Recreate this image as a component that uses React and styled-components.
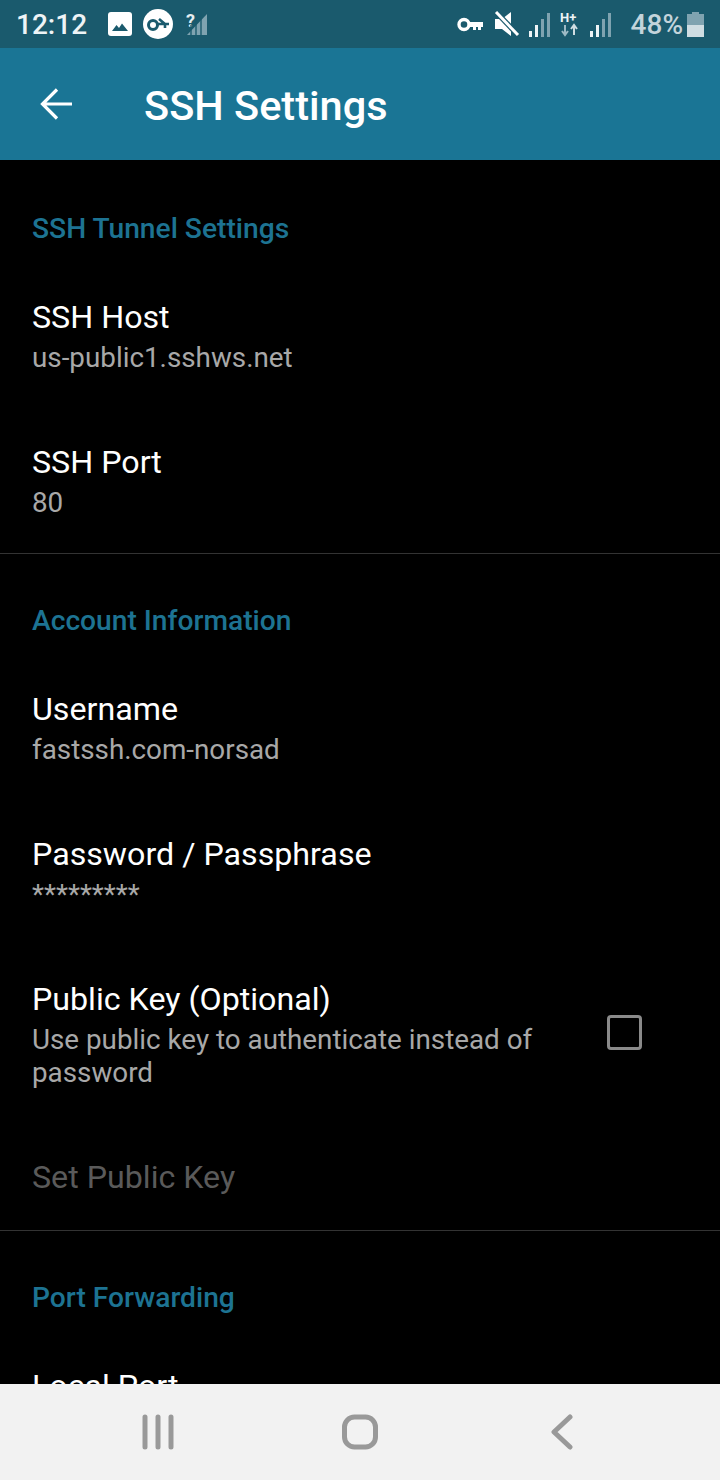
import React from 'react';
import styled, {createGlobalStyle} from 'styled-components';

const GlobalStyle = createGlobalStyle`
html, body {
    margin: 0;
    padding: 0;
    background: #000;
    font-family: Roboto, "Noto Sans", sans-serif;
}
`;

const Screen = styled.div`
width: 720px;
height: 1480px;
display: flex;
flex-direction: column;
overflow: hidden;
background: #000;
`;

const StatusBar = styled.div`
height: 48px;
flex: none;
display: flex;
align-items: center;
justify-content: space-between;
padding: 0 16px 0 16px;
background: #1a5a6d;
`;

const StatusGroup = styled.div`
display: flex;
align-items: center;
`;

const Clock = styled.span`
width: 92px;
font-size: 28px;
font-weight: 500;
color: #eef4f6;
`;

const Battery = styled.span`
margin-left: 19px;
font-size: 28px;
font-weight: 500;
color: #c3d4db;
`;

const StatusIcon = styled.svg`
flex: none;
display: block;
margin-left: ${props => props.$gap || 0}px;
`;

const Toolbar = styled.header`
height: 112px;
flex: none;
display: flex;
align-items: center;
padding-left: 40px;
background: #1a7595;
`;

const Title = styled.h1`
margin: 2px 0 0 72px;
font-size: 41.5px;
font-weight: 500;
color: #fff;
`;

const Content = styled.main`
flex: 1;
min-height: 0;
overflow: hidden;
`;

const Section = styled.section`
border-bottom: ${props => props.$last ? 'none' : '1px solid #333'};
padding-top: ${props => props.$first ? 2 : 0}px;
`;

const SectionTitle = styled.h2`
margin: 0;
padding: 49.5px 32px 18.5px;
font-size: 28.2px;
line-height: 33px;
font-weight: 500;
color: #1d7392;
`;

const Row = styled.div`
display: flex;
align-items: center;
padding: 34px 32px ${props => props.$compact ? 33 : 34}px;
`;

const RowText = styled.div`
flex: 1;
min-width: 0;
`;

const RowTitle = styled.div`
font-size: 32.2px;
line-height: 40px;
color: ${props => props.$disabled ? '#5a5a5a' : '#fff'};
`;

const RowSummary = styled.div`
margin-top: 4px;
font-size: 27.8px;
line-height: 33px;
color: #a8a8a8;
`;

const CheckBox = styled.div`
flex: none;
width: 35px;
height: 35px;
box-sizing: border-box;
margin: 0 46px 3px 40px;
border: 3px solid #8a8a8a;
border-radius: 4px;
`;

const NavBar = styled.nav`
height: 96px;
flex: none;
display: flex;
align-items: center;
justify-content: center;
background: #f2f2f2;
`;

const NavSlot = styled.div`
width: 202px;
display: flex;
justify-content: center;
`;

// signal bars, the first few lit and the rest dimmed
const Signal = ({gap, lit}) => (
    <StatusIcon $gap={gap} width="23" height="26" viewBox="0 0 23 26">
        {[[1, 20, 6], [7, 14, 12], [13, 8, 18], [19, 2, 24]].map(([x, y, h], i) => (
            <rect key={x} x={x} y={y} width="3" height={h} fill={i < lit ? '#eef4f6' : '#7fa3b0'}/>
        ))}
    </StatusIcon>
);

const LeftIcons = () => (
    <>
        <StatusIcon width="24" height="24" viewBox="0 0 24 24">
            <rect x="0" y="0" width="24" height="24" rx="3" fill="#fff"/>
            <path d="M4 19l4.5-6 2.5 3 3-4.5 6 7.5z" fill="#1a5a6d"/>
        </StatusIcon>
        <StatusIcon $gap={10} width="32" height="30" viewBox="0 0 32 30">
            <circle cx="16" cy="15" r="15" fill="#fff"/>
            <circle cx="11" cy="16" r="4.5" fill="none" stroke="#1a5a6d" strokeWidth="3"/>
            <path d="M15 15h12M23 15v4M17 10l6 5" fill="none" stroke="#1a5a6d" strokeWidth="2.6"/>
        </StatusIcon>
        <StatusIcon $gap={11} width="24" height="28" viewBox="0 0 24 28">
            <text x="1" y="17" fontFamily="Roboto" fontSize="18" fontWeight="700" fill="#e6eef1">?</text>
            <path d="M2 25L22 4v21z" fill="#7fa3b0"/>
            <path d="M6 15v11M11 9v17M16 4v22" stroke="#1a5a6d" strokeWidth="1.4"/>
        </StatusIcon>
    </>
);

const RightIcons = () => (
    <>
        <StatusIcon width="26" height="15" viewBox="0 0 26 15">
            <circle cx="7" cy="7.5" r="5" fill="none" stroke="#fff" strokeWidth="3.4"/>
            <path d="M11 5h15v5h-2v3h-3v-3h-2v3h-3v-3h-5z" fill="#fff"/>
        </StatusIcon>
        <StatusIcon $gap={11} width="26" height="26" viewBox="0 0 26 26">
            <path d="M1 8h7l9-7v24l-9-7H1z" fill="#fff"/>
            <path d="M3 2l21 22" stroke="#1a5a6d" strokeWidth="5.4"/>
            <path d="M2 1l22 23" stroke="#fff" strokeWidth="3"/>
        </StatusIcon>
        <Signal gap={8} lit={2}/>
        <StatusIcon $gap={9} width="20" height="26" viewBox="0 0 20 26">
            <text x="0" y="11" fontFamily="Roboto" fontSize="13" fontWeight="700" fill="#eef4f6">H+</text>
            <path d="M5 14v10M2 20l3 4 3-4" fill="none" stroke="#9dbac5" strokeWidth="2"/>
            <path d="M14 24V14M11 18l3-4 3 4" fill="none" stroke="#cfdde2" strokeWidth="2"/>
        </StatusIcon>
        <Signal gap={9} lit={2}/>
        <Battery>48%</Battery>
        <StatusIcon $gap={4} width="17" height="25" viewBox="0 0 17 25">
            <path d="M5 0h7v2h5v23H0V2h5z" fill="#7fa3b0"/>
            <rect y="13" width="17" height="12" fill="#cfdde2"/>
        </StatusIcon>
    </>
);

const SettingRow = ({title, summary, disabled, checkbox}) => (
    <Row $compact={!summary}>
        <RowText>
            <RowTitle $disabled={disabled}>{title}</RowTitle>
            {summary && <RowSummary>{summary}</RowSummary>}
        </RowText>
        {checkbox && <CheckBox/>}
    </Row>
);

class App extends React.Component {
    render() {
        return (
            <Screen>
                <GlobalStyle/>
                <StatusBar>
                    <StatusGroup>
                        <Clock>12:12</Clock>
                        <LeftIcons/>
                    </StatusGroup>
                    <StatusGroup>
                        <RightIcons/>
                    </StatusGroup>
                </StatusBar>
                <Toolbar>
                    <svg width="32" height="32" viewBox="0 0 32 32" fill="none" stroke="#fff" strokeWidth="3.2">
                        <path d="M32 16H3M17 1.5L2.5 16 17 30.5"/>
                    </svg>
                    <Title>SSH Settings</Title>
                </Toolbar>
                <Content>
                    <Section $first>
                        <SectionTitle>SSH Tunnel Settings</SectionTitle>
                        <SettingRow title="SSH Host" summary="us-public1.sshws.net"/>
                        <SettingRow title="SSH Port" summary="80"/>
                    </Section>
                    <Section>
                        <SectionTitle>Account Information</SectionTitle>
                        <SettingRow title="Username" summary="fastssh.com-norsad"/>
                        <SettingRow title="Password / Passphrase" summary="*********"/>
                        <SettingRow
                            title="Public Key (Optional)"
                            summary="Use public key to authenticate instead of password"
                            checkbox
                        />
                        <SettingRow title="Set Public Key" disabled/>
                    </Section>
                    <Section $last>
                        <SectionTitle>Port Forwarding</SectionTitle>
                        <SettingRow title="Local Port"/>
                    </Section>
                </Content>
                <NavBar>
                    <NavSlot>
                        <svg width="34" height="36" viewBox="0 0 34 36" fill="none" stroke="#999" strokeWidth="5" strokeLinecap="round">
                            <path d="M4 3v30M17 3v30M30 3v30"/>
                        </svg>
                    </NavSlot>
                    <NavSlot>
                        <svg width="36" height="36" viewBox="0 0 36 36" fill="none" stroke="#999" strokeWidth="5">
                            <rect x="2.5" y="3" width="31" height="30" rx="10"/>
                        </svg>
                    </NavSlot>
                    <NavSlot>
                        <svg width="24" height="36" viewBox="0 0 24 36" fill="none" stroke="#999" strokeWidth="5" strokeLinecap="round" strokeLinejoin="round">
                            <path d="M20 3L4 18l16 15"/>
                        </svg>
                    </NavSlot>
                </NavBar>
            </Screen>
        );
    }
}

export default App;
